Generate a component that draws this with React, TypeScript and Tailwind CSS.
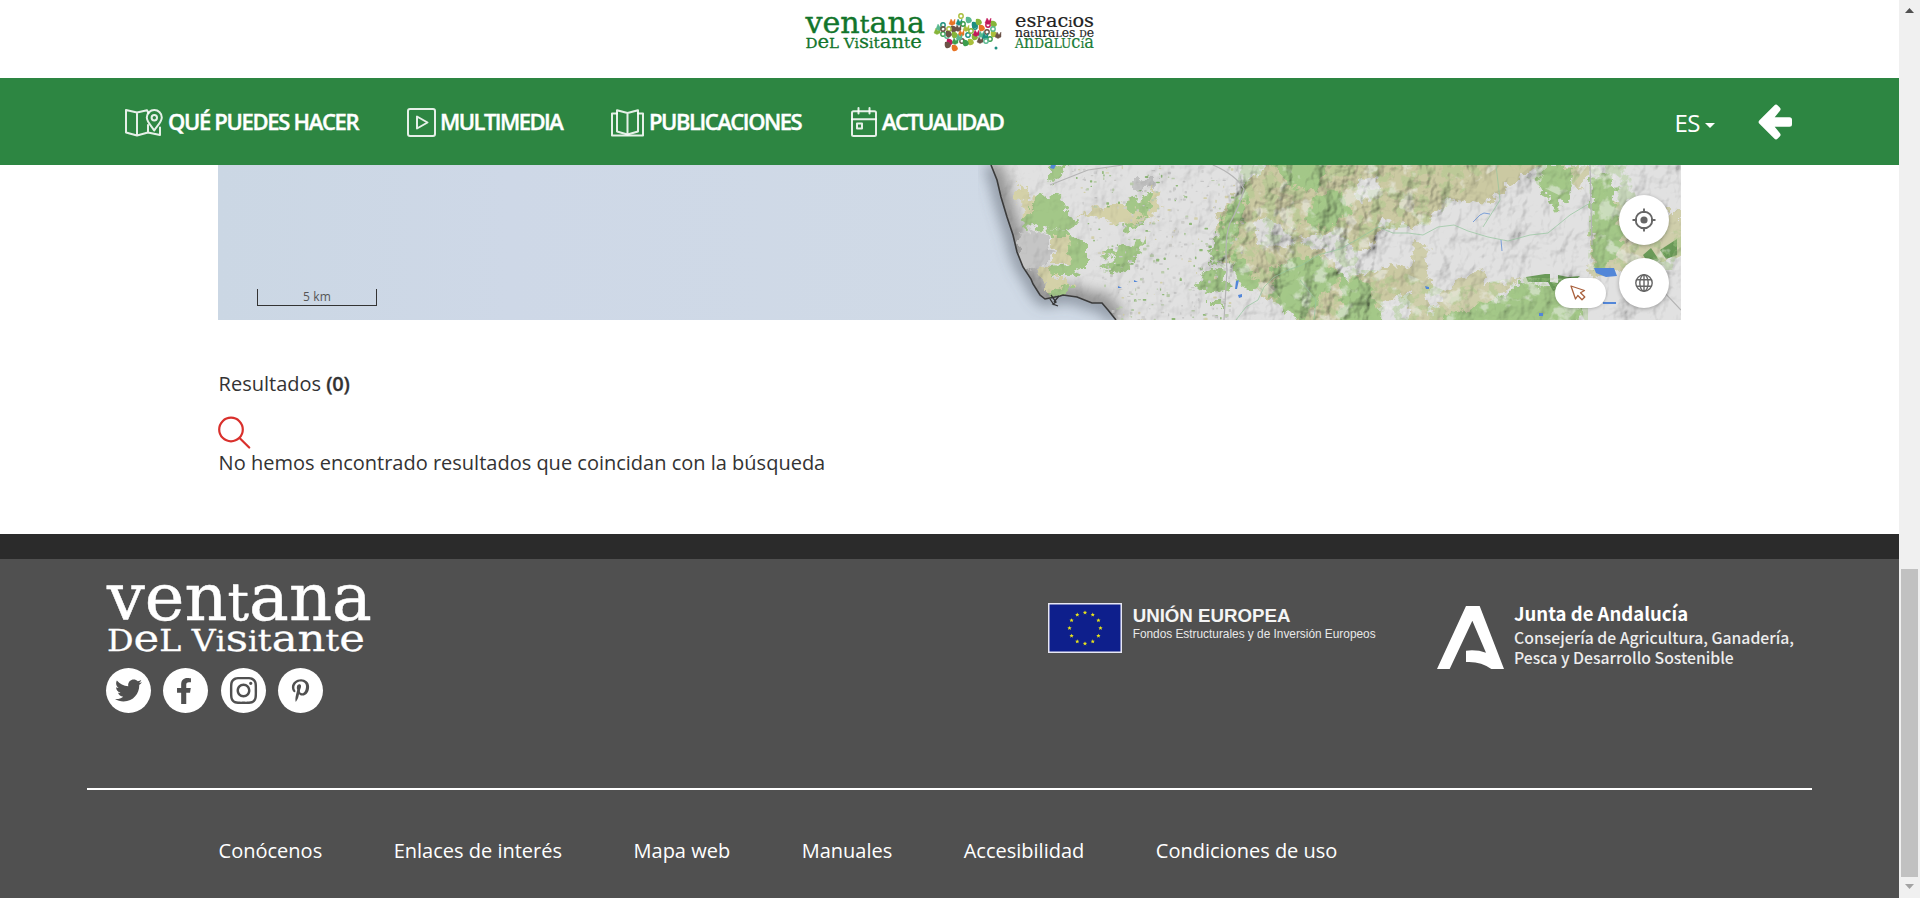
import React from "react";
import { FaFacebookF, FaInstagram, FaPinterestP, FaTwitter } from "react-icons/fa";

const SLAB = "'DejaVu Serif', serif";

function seeded(seed: number) {
  let s = seed;
  return () => {
    s = (s * 1664525 + 1013904223) % 4294967296;
    return s / 4294967296;
  };
}

/* ---------- Logos ---------- */

function WindowLogo({ className, fill, weight }: { className: string; fill: string; weight: number }) {
  return (
    <svg viewBox="0 0 266 70" preserveAspectRatio="none" overflow="visible" className={className} fill={fill} stroke={fill} strokeWidth={weight} strokeLinejoin="round" fontFamily={SLAB}>
      <text x="1" y="36.500" fontSize="65" textLength="265" lengthAdjust="spacingAndGlyphs">
        ven<tspan fontSize="52">t</tspan>ana
      </text>
      <text x="1" y="68" fontSize="38" strokeWidth={weight * 0.6} textLength="258" lengthAdjust="spacingAndGlyphs">
        <tspan fontSize="29">D</tspan>e<tspan fontSize="29">L V</tspan>
        <tspan fontSize="27">i</tspan>s<tspan fontSize="27">i</tspan><tspan fontSize="30">t</tspan>an<tspan fontSize="30">t</tspan>e
      </text>
    </svg>
  );
}

const DOT_COLORS = ["#86b53a", "#1d8f80", "#6b5346", "#e87424", "#c2185b", "#58b88f", "#a9bf3b", "#3c9d4e"];
const DOTS: [number, number, number][] = [
  [181, 16, 6], [189, 20, 5], [172, 22, 3], [163, 25, 1], [195, 25, 1], [208, 21, 4], [208, 25, 4], [214, 24, 0],
  [157, 31, 0], [163, 34, 7], [174, 29, 2], [186, 28, 6], [195, 27, 1], [202, 28, 3], [159, 27, 5], [169, 29, 6],
  [175, 35, 0], [181, 33, 3], [188, 35, 1], [195, 37, 0], [201, 34, 5], [207, 32, 2], [214, 34, 6], [218, 35, 2],
  [167, 36, 5], [170, 42, 4], [175, 41, 7], [182, 41, 2], [191, 42, 6], [200, 40, 2], [210, 39, 7], [175, 48, 3],
  [179, 22, 1], [183, 24, 7], [186, 43, 7], [196, 33, 4], [213, 29, 5], [168, 45, 2],
  [178, 28, 2], [191, 31, 0], [169, 34, 2], [205, 36, 1], [163, 29, 2], [199, 22, 0], [179, 37, 5], [206, 41, 5],
];

function HeaderLogo() {
  return (
    <div className="flex items-start">
      <WindowLogo className="mt-4 h-[33px] w-[120px]" fill="#12752b" weight={0.9} />
      <svg width="78" height="54" viewBox="149 0 78 54" className="ml-[4px]">
        {DOTS.map(([x, y, c], i) =>
          i % 3 === 0 ? (
            <circle key={i} cx={x} cy={y} r="2.200" fill="none" stroke={DOT_COLORS[c]} strokeWidth="1.400" />
          ) : i % 3 === 1 ? (
            <path key={i} d={`M${x - 3} ${y - 3}q5 -1 6 4q-2 3 -5 2q-2 -2 -1 -6z`} fill={DOT_COLORS[c]} />
          ) : (
            <path key={i} d={`M${x - 3} ${y + 2}l2 -5 2 3 2 -3v5l-3 1.500z`} fill={DOT_COLORS[c]} stroke={DOT_COLORS[c]} strokeWidth=".4" />
          ),
        )}
        <circle cx="216" cy="48" r="1.500" fill="#1d8f80" />
      </svg>
      <svg width="81" height="54" viewBox="0 0 81 54" overflow="visible" className="ml-[7px]" fontFamily={SLAB}>
        <g fill="#222" stroke="#222" strokeWidth=".2">
          <text x="1" y="27" fontSize="19" textLength="79" lengthAdjust="spacingAndGlyphs">
            es<tspan fontSize="14">P</tspan>ac<tspan fontSize="13">i</tspan>os
          </text>
          <text x="1" y="36.500" fontSize="12.500" textLength="79" lengthAdjust="spacingAndGlyphs">
            na<tspan fontSize="10">t</tspan>ura<tspan fontSize="9.500">L</tspan>es <tspan fontSize="9.500">D</tspan>e
          </text>
        </g>
        <text x="1" y="48" fontSize="18" fill="#1c7d38" stroke="#1c7d38" strokeWidth=".2" textLength="79" lengthAdjust="spacingAndGlyphs">
          <tspan fontSize="13.500">A</tspan>n<tspan fontSize="13.500">D</tspan>a<tspan fontSize="13.500">LU</tspan>c<tspan fontSize="13.500">í</tspan>a
        </text>
      </svg>
    </div>
  );
}

/* ---------- Navigation ---------- */

const navStroke = { fill: "none", stroke: "#fff", strokeOpacity: 0.88, strokeWidth: 2, strokeLinejoin: "round", strokeLinecap: "round" } as const;

function MapIcon() {
  return (
    <svg width="38" height="28" viewBox="0 0 38 28" {...navStroke}>
      <path d="M23.500 4.200L22 1.200L12 3.500L1 1V23.500L12 26.500L23 23.500L35 26V18.500M12 3.500V26.500M23 16V23.500" />
      <path d="M29.200 21.500C27 17.500 21.800 13 21.800 8.500a7.500 7.500 0 0 1 15 0C36.800 13 31.500 17.500 29.200 21.500z" />
      <circle cx="29.300" cy="8.800" r="2.700" />
    </svg>
  );
}
function PlayIcon() {
  return (
    <svg width="29" height="29" viewBox="0 0 29 29" {...navStroke}>
      <rect x="1" y="1" width="27" height="27" rx="2" />
      <path d="M10 8.500V20.500L20.500 14.500z" />
    </svg>
  );
}
function BookIcon() {
  return (
    <svg width="33" height="28" viewBox="0 0 33 28" {...navStroke}>
      <path d="M6 4.500H1V26.500H32V4.500H27" />
      <path d="M16.500 4L6 1.200V22.500L16.500 25.500L27 22.500V1.200zV25.500" />
    </svg>
  );
}
function CalendarIcon() {
  return (
    <svg width="26" height="30" viewBox="0 0 26 30" {...navStroke}>
      <rect x="1" y="4.200" width="24" height="24.800" rx="1.500" />
      <path d="M1 12.200H25M7.500 1V6.500M18.500 1V6.500M6 16.500H11V21.500H6z" />
    </svg>
  );
}

function NavBar() {
  return (
    <nav className="flex h-[87px] items-center bg-[#2d8642] pl-[125px] text-[22px] leading-[30px] font-semibold text-white [-webkit-text-stroke:0.4px_white]">
      <a className="flex w-[282px] items-center gap-[5px] pt-[2px] tracking-[-1.320px]"><MapIcon /><span className="-mt-[3px]">QUÉ PUEDES HACER</span></a>
      <a className="flex w-[204px] items-center gap-[4px] pt-[2px] tracking-[-1.550px]"><PlayIcon /><span className="-mt-[3px]">MULTIMEDIA</span></a>
      <a className="flex w-[240px] items-center gap-[5px] pt-[2px] tracking-[-1.450px]"><BookIcon /><span className="-mt-[3px]">PUBLICACIONES</span></a>
      <a className="flex items-center gap-[5px] pt-[2px] tracking-[-1.600px]"><span className="-mt-px"><CalendarIcon /></span><span className="-mt-[3px]">ACTUALIDAD</span></a>
      <div className="ml-auto flex items-center pr-[107px] font-normal [-webkit-text-stroke:0]">
        <span className="mt-[2px] text-2xl tracking-[-0.500px]">ES</span>
        <svg width="10" height="5" viewBox="0 0 10 5" className="mt-[8px] ml-[5px]" fill="#fff"><path d="M0 0H10L5 5z" /></svg>
        <svg width="34" height="36" viewBox="0 0 34 36" className="ml-[43px]" fill="#fff" stroke="#fff" strokeWidth="5" strokeLinejoin="round">
          <path d="M3.200 18L18 3.200L20 5.200L11.500 15.800H31.500V20.200H11.500L20 30.800L18 32.800z" />
        </svg>
      </div>
    </nav>
  );
}

/* ---------- Map ---------- */

const COAST =
  "M773 0L779 15L783 32L789 52L795 70L799 87L805 102L813 114L815 119L822 130L827 134L832 133L842 131L845 130L859 132L874 138L884 138L890 145L898 155";

const SHRUBS = (() => {
  const rnd = seeded(41);
  return Array.from({ length: 520 }, () => {
    const x = 835 + rnd() * 190;
    const y = rnd() * 155;
    const w = 0.8 + rnd() * 3;
    const h = 0.8 + rnd() * 2.2;
    return { x, y, w, h, c: ["#8fb877", "#c6c6c6", "#cbcbc8", "#bccdae", "#cfcfcf", "#d2cfab"][Math.floor(rnd() * 6)] };
  }).filter((b) => b.x > 850 + b.y * 0.3 && b.x < 1040 - b.y * 0.2);
})();

function Terrain() {
  return (
    <svg width="1463" height="155" viewBox="0 0 1463 155" className="block">
      <defs>
        <linearGradient id="sea" x1="0" x2="1" y1="0" y2="0">
          <stop offset="0" stopColor="#cbd7e4" />
          <stop offset=".2" stopColor="#ced8e7" />
          <stop offset=".55" stopColor="#d0dae6" />
        </linearGradient>
        <clipPath id="land"><path d={COAST + "H1463V0z"} /></clipPath>
        <clipPath id="hills">
          <path d="M1020 -5H1290L1240 30L1212 60L1160 65L1140 100L1180 155H1085L1040 130L995 95L1000 60L1020 25z" />
          <path d="M1060 105H1180L1225 125L1300 112L1370 115V155H1080z" />
          <path d="M1372 0H1410L1425 60L1463 65V105H1370z" />
          <path d="M1290 0H1370L1345 32L1320 20z" />
        </clipPath>
        <clipPath id="uplands">
          <path d="M1020 0H1260L1235 45L1160 75L1150 155H1085L1050 120L995 95L1000 55z" />
        </clipPath>
        <filter id="rough" x="-5%" y="-5%" width="110%" height="110%">
          <feTurbulence type="fractalNoise" baseFrequency=".11" numOctaves="4" seed="8" />
          <feDisplacementMap in="SourceGraphic" scale="17" xChannelSelector="R" yChannelSelector="G" />
        </filter>
        <filter id="relief" x="0" y="0" width="100%" height="100%">
          <feTurbulence type="fractalNoise" baseFrequency=".034 .027" numOctaves="4" seed="12" result="n" />
          <feColorMatrix in="n" values="0 0 0 0 0  0 0 0 0 0  0 0 0 0 0  1 0 0 0 0" />
          <feDiffuseLighting surfaceScale="14" diffuseConstant="1.250" lightingColor="#fff">
            <feDistantLight azimuth="225" elevation="54" />
          </feDiffuseLighting>
        </filter>
        <filter id="leaves" x="0" y="0" width="100%" height="100%">
          <feTurbulence type="fractalNoise" baseFrequency=".085" numOctaves="5" seed="3" />
          <feColorMatrix values="0 0 0 0 .38  0 0 0 0 .6  0 0 0 0 .25  0 10 0 0 -4.800" />
        </filter>
        <filter id="patches" x="0" y="0" width="100%" height="100%">
          <feTurbulence type="fractalNoise" baseFrequency=".06" numOctaves="4" seed="19" />
          <feColorMatrix values="0 0 0 0 .74  0 0 0 0 .74  0 0 0 0 .74  0 14 0 0 -7.600" />
        </filter>
        <filter id="pale" x="0" y="0" width="100%" height="100%">
          <feTurbulence type="fractalNoise" baseFrequency=".05" numOctaves="4" seed="27" />
          <feColorMatrix values="0 0 0 0 .88  0 0 0 0 .88  0 0 0 0 .87  9 0 0 0 -5.100" />
        </filter>
        <filter id="soft"><feGaussianBlur stdDeviation="7" /></filter>
      </defs>
      <rect width="1463" height="155" fill="url(#sea)" />
      <path d={COAST} fill="none" stroke="#59616c" strokeOpacity=".6" strokeWidth="14" filter="url(#soft)" />
      <g clipPath="url(#land)">
        <path d={COAST + "H1463V0z"} fill="#e1e1e1" />
        <rect x="840" width="200" height="155" filter="url(#patches)" opacity=".45" />
        <path d={COAST} fill="none" stroke="#777" strokeOpacity=".75" strokeWidth="20" filter="url(#soft)" />
        <g filter="url(#rough)">
          <path fill="#c5c5c5" d="M802 68L828 64L833 86L826 104L806 109L800 94zM915 14H940V24H915zM1085 3L1115 1V24L1085 18z" />
          <path fill="#d4d1a8" d="M798 18L812 24L805 38L798 34zM804 34L814 33V51L805 52zM834 72L850 71L854 98L834 98zM822 106L836 101V121L824 118zM830 113H852V126L828 126zM862 50L895 39L925 46L934 54L908 61L880 53zM932 22L943 28L938 54L930 50z" />
          <path fill="#a3c788" d="M814 34L842 30L846 46L860 54L850 67L828 62L806 64L805 52L814 48zM828 62L846 67L868 80L868 104L852 111L835 111L834 101L852 98L850 72L832 72zM884 88L925 74L922 90L908 103L894 109L880 101L900 94zM906 39L932 28L930 51L912 46zM902 60L932 51L918 64L908 66zM830 126L852 120V132L832 135zM832 2L850 0L838 18L832 14z" />
          <path fill="#cbc9a2" d="M1025 21L1060 -8L1180 -5L1330 -5L1290 21L1270 39L1230 34L1210 56L1160 66L1150 86L1110 84L1125 116L1175 98L1215 116L1170 136L1130 165L1090 165L1060 136L1040 131L1020 101L1008 96L995 98L1000 51z" />
          <path fill="#cfceab" d="M1195 76H1208L1212 165H1190zM1225 126L1262 104L1270 118L1300 116L1250 151L1205 165zM1375 21L1410 46L1465 46V91L1372 114zM1340 0H1372L1362 26z" />
          <path fill="#a3c788" d="M1022 26L1030 14L1026 51L1008 96L990 100L998 71L1004 56zM1050 -5H1110L1100 28L1070 20zM1096 32L1120 24L1135 46L1105 66L1085 56zM988 102L1005 108L1012 124L985 129L980 121zM992 134H1004V142H992zM1012 86L1030 101L1045 126L1020 118zM1055 101L1100 91L1125 111L1080 156L1055 131z" />
          <path fill="#a3c788" d="M1122 111L1150 118L1168 165H1122zM1225 152L1290 130L1300 118L1370 124L1358 165H1218zM1372 12L1395 8L1404 85L1376 106zM1325 2L1355 2L1350 31L1336 46L1320 16z" />
          <path fill="#dddddc" d="M1038 51L1075 66L1070 84L1040 78zM1138 16L1160 11L1158 34L1142 36zM1162 48L1175 56L1165 66zM1080 74L1120 66L1142 91L1115 96z" />
        </g>
        <g fill="#6a9a58">
          <path d="M1308 112L1327 109H1332V117L1340 118V110L1350 112L1362 111L1352 120L1335 126L1330 117L1310 117zM1425 90L1433 83L1441 95L1432 101zM1442 85L1459 74V90L1448 94z" />
        </g>
        <g clipPath="url(#hills)" opacity=".42">
          <rect x="960" width="503" height="155" filter="url(#leaves)" />
        </g>
        <g clipPath="url(#hills)" opacity=".5">
          <rect x="960" width="503" height="155" filter="url(#pale)" />
        </g>
        {SHRUBS.map((b, i) => (
          <rect key={i} x={b.x} y={b.y} width={b.w} height={b.h} rx=".6" fill={b.c} />
        ))}
        <rect x="980" width="483" height="155" filter="url(#relief)" opacity=".24" style={{ mixBlendMode: "multiply" }} />
        <g clipPath="url(#uplands)" style={{ mixBlendMode: "multiply" }} opacity=".34">
          <rect x="980" width="483" height="155" filter="url(#relief)" />
        </g>
        <rect x="770" width="210" height="155" filter="url(#relief)" opacity=".13" style={{ mixBlendMode: "multiply" }} />
        <g fill="none" stroke="#b4b4b4" strokeWidth="1.200">
          <path d="M995 0Q1018 10 1026 24Q1022 40 1012 58Q1006 75 1009 105L1006 155" />
          <path d="M832 20L870 5L905 0M1372 0L1374 80M1430 110L1463 145" />
        </g>
        <g fill="none" stroke="#93c49c" strokeWidth=".7">
          <path d="M1018 155L1028 142L1040 135L1046 122L1056 112L1070 105L1084 100L1100 90L1122 84L1140 74L1160 62L1175 68L1190 68L1205 70L1220 62L1236 60L1250 66L1270 72L1290 76L1312 70L1330 68L1352 50L1372 38M1278 0L1282 35L1265 62M1082 115L1098 135L1096 155" />
        </g>
        <g fill="#5286d8">
          <path d="M833 0H838L836 4L832 3zM1018 116L1021 115L1019 124H1017zM1020 130L1024 129V132L1021 133zM1376 103H1396L1399 111L1388 112L1378 108zM1207 121L1211 122V124H1208zM900 121L904 123H900zM916 115L920 117H916zM1321 148H1325V151H1321zM1385 137H1398V139H1385z" />
        </g>
        <path d="M1255 57L1262 50L1266 48L1272 49M1283 75L1284 86" stroke="#7b9fd8" strokeWidth="1" fill="none" />
      </g>
      <path d={COAST} fill="none" stroke="#3b3b3b" strokeWidth="1.600" />
      <path d="M833 130L838 137L835 139L840 141M832 134L836 140M836 137L841 131" fill="none" stroke="#333" strokeWidth="1.300" />
    </svg>
  );
}

function MapPanel() {
  return (
    <section className="relative ml-[218px] h-[155px] w-[1463px] overflow-hidden">
      <Terrain />
      <div className="absolute top-[124px] left-[39px] h-[17px] w-[120px] border border-t-0 border-[#333] text-center text-xs leading-[15px] tracking-[0.200px] text-[#555]">5 km</div>
      <button className="absolute top-[30px] left-[1401px] flex size-[50px] items-center justify-center rounded-full bg-white shadow-[0_1px_4px_rgba(0,0,0,0.3)]">
        <svg width="24" height="24" viewBox="0 0 24 24" fill="none" stroke="#666" strokeWidth="1.900">
          <circle cx="12" cy="12" r="8.300" />
          <circle cx="12" cy="12" r="3.600" fill="#666" stroke="none" />
          <path d="M12 .5V5M12 19V23.500M.5 12H5M19 12H23.500" />
        </svg>
      </button>
      <button className="absolute top-[93px] left-[1401px] flex size-[50px] items-center justify-center rounded-full bg-white shadow-[0_1px_4px_rgba(0,0,0,0.3)]">
        <svg width="18" height="18" viewBox="0 0 18 18" fill="none" stroke="#666" strokeWidth="1.400">
          <circle cx="9" cy="9" r="8.200" />
          <ellipse cx="9" cy="9" rx="4.200" ry="8.200" />
          <path d="M9 .7V17.300M1.500 5.800H16.500M1.500 12.200H16.500" />
        </svg>
      </button>
      <button className="absolute top-[113px] left-[1337px] flex h-[30px] w-[51px] items-center justify-center rounded-full bg-white pr-[6px] shadow-[0_1px_3px_rgba(0,0,0,0.2)]">
        <svg width="16" height="16" viewBox="0 0 16 16" fill="none" stroke="#a9603c" strokeWidth="1.300" strokeLinejoin="round">
          <path d="M1 1L14.500 5.500L10.500 7.800L14.800 12L12 14.800L7.800 10.500L5.500 14z" />
        </svg>
      </button>
    </section>
  );
}

/* ---------- Results ---------- */

function Results() {
  return (
    <section className="h-[214px] pt-[50px] pl-[218.600px] text-xl leading-[27px] text-[#333]">
      <p>Resultados <span className="font-semibold tracking-[-0.300px] [-webkit-text-stroke:0.300px_#333]">(0)</span></p>
      <svg width="33" height="33" viewBox="0 0 33 33" className="-ml-[0.600px] mt-[19px] block" fill="none" stroke="#d9302c" strokeWidth="2.200" strokeLinecap="round">
        <circle cx="13" cy="13.500" r="11.800" />
        <path d="M21.800 22.200L31.200 31.500" />
      </svg>
      <p>No hemos encontrado resultados que coincidan con la búsqueda</p>
    </section>
  );
}

/* ---------- Footer ---------- */

const STAR = "M0 -2.100L.6 -.7L2.100 -.6L1 .4L1.300 1.900L0 1.100L-1.300 1.900L-1 .4L-2.100 -.6L-.6 -.7z";

function EuropeBlock() {
  return (
    <div className="flex gap-[11px]">
      <svg width="74" height="50" viewBox="0 0 74 50">
        <rect x=".75" y=".75" width="72.500" height="48.500" fill="#0e1f8c" stroke="#e8e8f4" strokeWidth="1.500" />
        {Array.from({ length: 12 }, (_, i) => {
          const a = (i * Math.PI) / 6;
          return <path key={i} d={STAR} fill="#e6e21c" transform={`translate(${37 + 15.5 * Math.sin(a)} ${25 - 15.5 * Math.cos(a)})`} />;
        })}
      </svg>
      <div className="flex flex-col font-['Liberation_Sans',sans-serif]">
        <span className="mt-[2px] text-[18.700px] leading-[21px] font-bold text-[#f4f4f4]">UNIÓN EUROPEA</span>
        <span className="mt-px text-[11.850px] leading-[14px] text-[#e8e8e8]">Fondos Estructurales y de Inversión Europeos</span>
      </div>
    </div>
  );
}

function JuntaBlock() {
  return (
    <div className="flex gap-[10px]">
      <svg width="67" height="63" viewBox="81 78 201 189" className="mt-[3px]" fill="#fff">
        <path d="M81 267L168 78H209L282 267H244Q212 243 168 246V212Q200 208 228 218L187 122L119 267z" />
      </svg>
      <div className="flex flex-col font-['Noto_Sans_CJK_SC',sans-serif] font-medium text-[#ededed]">
        <span className="-mt-px text-[18.500px] leading-[22px] font-bold text-white">Junta de Andalucía</span>
        <span className="mt-[4px] text-[15.750px] leading-[20px]">Consejería de Agricultura, Ganadería,</span>
        <span className="text-[15.750px] leading-[20px]">Pesca y Desarrollo Sostenible</span>
      </div>
    </div>
  );
}

function SocialLinks() {
  const disc = "flex size-[45px] items-center justify-center rounded-full bg-white text-[#505050]";
  return (
    <div className="mt-[15px] flex gap-[12.400px]">
      <a className={disc}><FaTwitter size={27} /></a>
      <a className={disc + " pr-[3px]"}><FaFacebookF size={26} /></a>
      <a className={disc}><FaInstagram size={31} /></a>
      <a className={disc}><FaPinterestP size={23} /></a>
    </div>
  );
}

const LINKS = ["Conócenos", "Enlaces de interés", "Mapa web", "Manuales", "Accesibilidad", "Condiciones de uso"];

function Footer() {
  return (
    <footer className="flex flex-1 flex-col border-t-[25px] border-[#2b2b2b] bg-[#505050] text-white">
      <div className="flex h-[229px] items-start pl-[106px]">
        <div className="pt-[24px]">
          <WindowLogo className="block h-[70px] w-[266px]" fill="#fff" weight={0.5} />
          <SocialLinks />
        </div>
        <div className="ml-auto flex items-start gap-[61.500px] pt-[44px] pr-[105px]">
          <EuropeBlock />
          <JuntaBlock />
        </div>
      </div>
      <hr className="ml-[87px] w-[1725px] border-t-2 border-white" />
      <ul className="mt-[47px] ml-[218.600px] flex gap-[71.500px] text-xl leading-[27px]">
        {LINKS.map((l) => <li key={l}>{l}</li>)}
      </ul>
    </footer>
  );
}

function Scrollbar() {
  return (
    <div className="flex h-full w-[21px] flex-col items-center bg-[#f0f0f0]">
      <svg width="9" height="5" viewBox="0 0 9 5" className="mt-[8px]" fill="#505050"><path d="M4.500 0L9 5H0z" /></svg>
      <div className="mt-[556px] mr-px h-[308px] w-[17px] bg-[#c1c1c1]" />
      <svg width="9" height="5" viewBox="0 0 9 5" className="mt-[7px]" fill="#a3a3a3"><path d="M0 0H9L4.500 5z" /></svg>
    </div>
  );
}

export default function App() {
  return (
    <div className="flex h-[898px] w-[1920px] overflow-hidden bg-white font-['Open_Sans',sans-serif]">
      <main className="flex h-full w-[1899px] flex-col">
        <header className="h-[78px] pl-[805px]"><HeaderLogo /></header>
        <NavBar />
        <MapPanel />
        <Results />
        <Footer />
      </main>
      <Scrollbar />
    </div>
  );
}
